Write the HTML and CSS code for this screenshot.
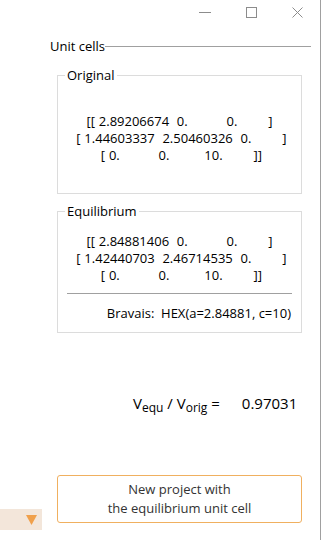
FILE: index.html
```html
<!DOCTYPE html>
<html lang="en">
<head>
    <meta charset="UTF-8">
    <title>Unit cells</title>
    <link rel="stylesheet" href="styles.css">
</head>
<body>
    <div class="window">
        <!-- Title bar -->
        <div class="titlebar">
            <div class="win-btn">
                <svg width="12" height="11" viewBox="0 0 12 11"><path d="M0 5.5H12" stroke="#8c8c8c" stroke-width="1"/></svg>
            </div>
            <div class="win-btn">
                <svg width="11" height="11" viewBox="0 0 11 11"><rect x="0.5" y="0.5" width="10" height="10" fill="none" stroke="#8c8c8c" stroke-width="1"/></svg>
            </div>
            <div class="win-btn">
                <svg width="11" height="11" viewBox="0 0 11 11"><path d="M0.5 0.5L10.5 10.5M10.5 0.5L0.5 10.5" stroke="#8c8c8c" stroke-width="1"/></svg>
            </div>
        </div>

        <!-- Section header -->
        <div class="section-head">
            <span>Unit cells</span>
            <div class="head-line"></div>
        </div>

        <fieldset class="group group-orig">
            <legend>Original</legend>
            <pre class="matrix">[[ 2.89206674  0.          0.        ]
 [ 1.44603337  2.50460326  0.        ]
 [ 0.          0.         10.        ]]</pre>
        </fieldset>

        <fieldset class="group group-equ">
            <legend>Equilibrium</legend>
            <pre class="matrix">[[ 2.84881406  0.          0.        ]
 [ 1.42440703  2.46714535  0.        ]
 [ 0.          0.         10.        ]]</pre>
            <div class="separator"></div>
            <div class="bravais">Bravais:&nbsp; HEX(a=2.84881, c=10)</div>
        </fieldset>

        <div class="ratio">
            <span class="ratio-label">V<sub>equ</sub> / V<sub>orig</sub> =</span>
            <span class="ratio-value">0.97031</span>
        </div>

        <div class="bottom-row">
            <div class="side-tab">
                <svg width="11" height="10" viewBox="0 0 11 10"><path d="M0 0H11L5.5 10Z" fill="#f0a04b"/></svg>
            </div>
            <button class="new-project">New project with<br>the equilibrium unit cell</button>
        </div>
    </div>
</body>
</html>
```

FILE: styles.css
```css
body {
    margin: 0;
    background: #ffffff;
    font-family: 'Open Sans', sans-serif;
    font-size: 13px;
    color: #000;
}

.window {
    width: 320px;
    height: 540px;
    border-right: 1px solid #a0a0a0;
    display: flex;
    flex-direction: column;
}

.titlebar {
    height: 24px;
    display: flex;
    justify-content: flex-end;
}

.win-btn {
    width: 46px;
    display: flex;
    align-items: center;
    justify-content: center;
}

.section-head {
    display: flex;
    align-items: center;
    margin: 14px 9px 0 50px;
    height: 16px;
}

.head-line {
    flex: 1;
    height: 1px;
    background: #a0a0a0;
}

.group {
    margin: 0 0 0 57px;
    width: 245px;
    box-sizing: border-box;
    border: 1px solid #dcdcdc;
    padding: 0;
}

.group legend {
    margin-left: 7px;
    padding: 0 2px;
    line-height: 16px;
}

.group-orig {
    margin-top: 13px;
    height: 127px;
}

.group-orig .matrix {
    margin-top: 30px;
}

.group-equ {
    margin-top: 9px;
    height: 130px;
}

.group-equ .matrix {
    margin-top: 14px;
}

.matrix {
    font-family: 'Open Sans', sans-serif;
    font-size: 13px;
    line-height: 17px;
    word-spacing: 0.5px;
    text-align: center;
    margin: 0;
}

.separator {
    height: 1px;
    background: #a0a0a0;
    margin: 9px 9px 0 9px;
}

.bravais {
    text-align: right;
    padding-right: 10px;
    margin-top: 10px;
}

.ratio {
    display: flex;
    align-items: baseline;
    margin: 60px 0 0 133px;
    font-size: 15px;
}

.ratio sub {
    font-size: 12px;
    vertical-align: -3px;
}

.ratio-value {
    margin-left: 22px;
}

.bottom-row {
    display: flex;
    margin-top: 59px;
}

.side-tab {
    width: 42px;
    height: 21px;
    margin-top: 34px;
    background: #f3e6da;
    display: flex;
    align-items: center;
    justify-content: flex-end;
    box-sizing: border-box;
    padding-right: 5px;
}

.new-project {
    margin-left: 15px;
    width: 245px;
    height: 48px;
    background: #fff;
    border: 1px solid #f0b060;
    border-radius: 3px;
    font-family: 'Open Sans', sans-serif;
    font-size: 13px;
    line-height: 19px;
    color: #333;
    padding: 0;
}
```
